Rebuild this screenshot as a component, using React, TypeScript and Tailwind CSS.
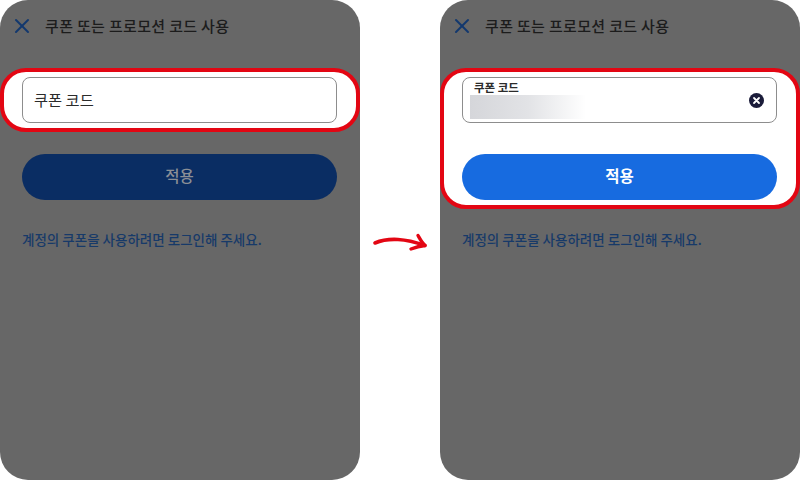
import { X } from 'lucide-react';

const font = "font-['Noto_Sans_CJK_KR','Noto_Sans',sans-serif]";

function Header() {
  return (
    <div className="flex items-center h-[52px] pl-[10px] gap-[11px]">
      <X size={24} strokeWidth={2} className="text-[#12386e]" />
      <span className="text-[15px] font-medium text-[#1c1c1c] tracking-[0.33px]">쿠폰 또는 프로모션 코드 사용</span>
    </div>
  );
}

function LoginNote({ className }: { className: string }) {
  return <p className={`${className} px-[22px] text-[13.5px] font-medium text-[#173a69] leading-[20px]`}>계정의 쿠폰을 사용하려면 로그인해 주세요.</p>;
}

function EmptyPhone() {
  return (
    <div className="w-[360px] h-[480px] rounded-[28px] bg-[#676767] shrink-0">
      <Header />
      <div className="mt-[16px] h-[64px] rounded-[26px] border-4 border-[#e30613] bg-white pl-[18px] pr-[19px] flex items-center">
        <div className="w-full h-[46px] rounded-[8px] border border-[#8d8d8d] flex items-center px-[11px] pb-[2px] text-[15.3px] text-[#2b2b2b]">쿠폰 코드</div>
      </div>
      <div className="mt-[22px] ml-[22px] mr-[23px] h-[46px] rounded-full bg-[#0a2d63] flex items-center justify-center text-[15.5px] font-medium text-[#8b8f96] pb-[2px]">적용</div>
      <LoginNote className="mt-[29px]" />
    </div>
  );
}

function FilledPhone() {
  return (
    <div className="w-[360px] h-[480px] rounded-[28px] bg-[#676767] shrink-0">
      <Header />
      <div className="mt-[16px] h-[141px] rounded-[26px] border-4 border-[#e30613] bg-white pl-[18px] pr-[19px] pt-[5px]">
        <div className="relative h-[46px] rounded-[8px] border border-[#8d8d8d] px-[7px]">
          <div className="pl-[4px] text-[11.5px] font-bold text-[#2b2b2b] leading-[14px] pt-[2px]">쿠폰 코드</div>
          <div className="mt-[1px] h-[24px] w-[116px] bg-gradient-to-r from-[#d5d6da] via-[#e2e3e6] to-white" />
          <svg className="absolute right-[12px] top-[15px]" width="15" height="15" viewBox="0 0 15 15">
            <circle cx="7.5" cy="7.5" r="7.5" fill="#1b1c3a" />
            <path d="M5 5l5 5M10 5l-5 5" stroke="#fff" strokeWidth="1.8" strokeLinecap="round" />
          </svg>
        </div>
        <div className="mt-[31px] h-[46px] rounded-full bg-[#176be0] flex items-center justify-center text-[15.5px] font-bold text-white pb-[2px]">적용</div>
      </div>
      <LoginNote className="mt-[20px]" />
    </div>
  );
}

export default function App() {
  return (
    <div className={`w-[800px] h-[480px] bg-white flex overflow-hidden ${font}`}>
      <EmptyPhone />
      <div className="w-[80px] flex justify-center pt-[232px] shrink-0">
        <svg width="60" height="20" viewBox="0 0 60 20" fill="none">
          <path d="M5 11C12 8 19 7 28 7.5C37 8 45 10 55 13.5" stroke="#e30613" strokeWidth="3.6" strokeLinecap="round" />
          <path d="M48 3.5C50 7 52 11 55 13.5C51 14 45 15.5 41 17" stroke="#e30613" strokeWidth="3.4" strokeLinecap="round" strokeLinejoin="round" />
        </svg>
      </div>
      <FilledPhone />
    </div>
  );
}
